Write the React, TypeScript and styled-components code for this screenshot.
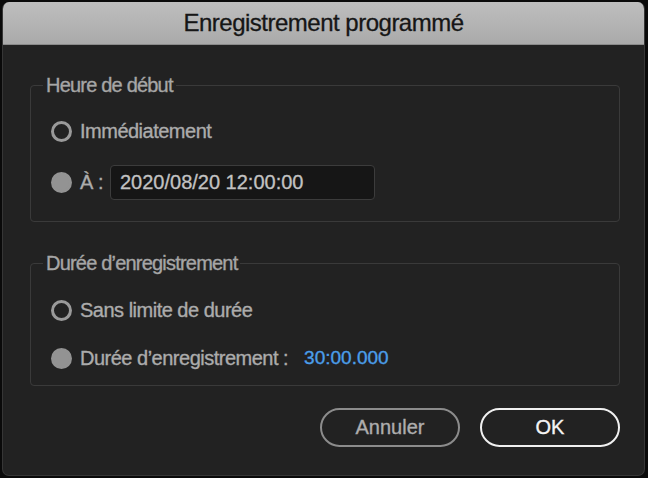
import React, { useState } from 'react';
import styled, { createGlobalStyle } from 'styled-components';

const GlobalStyle = createGlobalStyle`
  html, body {
    margin: 0;
    padding: 0;
    background: #0a0a0a;
    font-family: "Liberation Sans", Arial, sans-serif;
  }
`;

const Page = styled.div`
  width: 648px;
  height: 478px;
  padding: 2px 3px 2px 2px;
  box-sizing: border-box;
`;

const Window = styled.div`
  height: 100%;
  display: flex;
  flex-direction: column;
  border-radius: 7px;
  overflow: hidden;
  background: #222222;
  border: 1px solid #363636;
  border-top: none;
  box-sizing: border-box;
`;

const TitleBar = styled.div`
  height: 42px;
  flex: none;
  display: flex;
  align-items: center;
  justify-content: center;
  background: linear-gradient(#bebebe, #aaaaaa);
  border-bottom: 1px solid #8a8a8a;
  color: #161616;
  font-size: 24px;
  letter-spacing: -0.5px;
  -webkit-text-stroke: 0.3px #161616;
`;

const Body = styled.div`
  flex: 1;
  display: flex;
  flex-direction: column;
  padding: 28px 24px 0 27px;
`;

const Group = styled.fieldset<{ $gap: number; $pt: number; $pb: number }>`
  margin: 0 0 ${p => p.$gap}px 0;
  padding: ${p => p.$pt}px 20px ${p => p.$pb}px 20px;
  border: 1.5px solid #3a3a3a;
  border-radius: 4px;
  display: flex;
  flex-direction: column;
  gap: ${p => (p.$gap === 29 ? 15 : 12)}px;
  min-width: 0;
`;

const Legend = styled.legend`
  margin-left: -8px;
  padding: 0 3px;
  color: #a6a6a6;
  font-size: 20px;
  line-height: 24px;
  letter-spacing: -0.8px;
  -webkit-text-stroke: 0.35px #a6a6a6;
`;

const Row = styled.div`
  display: flex;
  align-items: center;
  height: 36px;
  color: #acacac;
  font-size: 20px;
  letter-spacing: -0.5px;
  cursor: default;
  -webkit-text-stroke: 0.35px currentColor;
`;

const Radio = styled.span<{ $checked?: boolean }>`
  width: 21px;
  height: 21px;
  box-sizing: border-box;
  border-radius: 50%;
  flex: none;
  margin-right: 8px;
  border: 3px solid ${p => (p.$checked ? '#939393' : '#9a9a9a')};
  background: ${p => (p.$checked ? '#939393' : 'transparent')};
`;

const Label = styled.span`
  white-space: nowrap;
`;

const DateField = styled.input`
  margin-left: 7px;
  width: 265px;
  height: 35px;
  box-sizing: border-box;
  padding: 0 9px;
  background: #161616;
  border: 1.5px solid #3c3c3c;
  border-radius: 4px;
  color: #c2c2c2;
  font-family: "Liberation Sans", Arial, sans-serif;
  font-size: 20px;
  outline: none;
  -webkit-text-stroke: 0.3px #c2c2c2;
`;

const Timecode = styled.span`
  margin-left: 16px;
  color: #4b9eea;
  font-size: 19px;
  letter-spacing: 0;
  -webkit-text-stroke: 0.35px #4b9eea;
`;

const Footer = styled.div`
  display: flex;
  justify-content: flex-end;
  gap: 20px;
`;

const Button = styled.button<{ $primary?: boolean }>`
  width: 140px;
  height: 39px;
  box-sizing: border-box;
  border-radius: 20px;
  background: transparent;
  border: ${p => (p.$primary ? '2.5px solid #f0f0f0' : '2px solid #8c8c8c')};
  color: ${p => (p.$primary ? '#f4f4f4' : '#aeaeae')};
  font-family: "Liberation Sans", Arial, sans-serif;
  font-size: 20px;
  -webkit-text-stroke: 0.35px currentColor;
  cursor: pointer;
`;

const App: React.FC = () => {
  const [start, setStart] = useState<'now' | 'at'>('at');
  const [limit, setLimit] = useState<'none' | 'duration'>('duration');

  return (
    <Page>
      <GlobalStyle />
      <Window>
        <TitleBar>Enregistrement programmé</TitleBar>
        <Body>
          <Group $gap={29} $pt={16} $pb={21}>
            <Legend>Heure de début</Legend>
            <Row onClick={() => setStart('now')}>
              <Radio $checked={start === 'now'} />
              <Label>Immédiatement</Label>
            </Row>
            <Row onClick={() => setStart('at')}>
              <Radio $checked={start === 'at'} />
              <Label>À :</Label>
              <DateField defaultValue="2020/08/20 12:00:00" />
            </Row>
          </Group>

          <Group $gap={22} $pt={17} $pb={9}>
            <Legend>Durée d’enregistrement</Legend>
            <Row onClick={() => setLimit('none')}>
              <Radio $checked={limit === 'none'} />
              <Label>Sans limite de durée</Label>
            </Row>
            <Row onClick={() => setLimit('duration')}>
              <Radio $checked={limit === 'duration'} />
              <Label>Durée d’enregistrement :</Label>
              <Timecode>30:00.000</Timecode>
            </Row>
          </Group>

          <Footer>
            <Button>Annuler</Button>
            <Button $primary>OK</Button>
          </Footer>
        </Body>
      </Window>
    </Page>
  );
};

export default App;
